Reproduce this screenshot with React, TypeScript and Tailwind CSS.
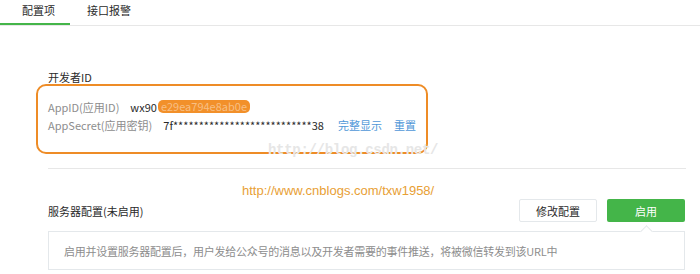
export default function App() {
  const stars = "*".repeat(27);

  return (
    <div className="relative w-[700px] h-[274px] overflow-hidden bg-white text-[11px] leading-[16px] text-[#2a2a2a] font-['Noto_Sans_CJK_SC',sans-serif]">
      {/* Tabs */}
      <div className="flex h-[26px] border-b border-[#e7e7e7]">
        <div className="w-[70px] pl-[22px] pt-[2px] border-b-2 border-[#44b549]">配置项</div>
        <div className="pl-[17px] pt-[2px]">接口报警</div>
      </div>

      <div className="pl-[48px] pr-[14px]">
        {/* Developer ID */}
        <div className="mt-[43px]">开发者ID</div>
        <div className="ml-[-12px] mt-[-1px] w-[392px] h-[70px] rounded-[10px] border-2 border-[#ee8c26] pl-[10px] pt-[12px] leading-[18px]">
          <div className="flex">
            <span className="text-[#8d8d8d]">AppID(应用ID)</span>
            <span className="ml-[11px]">wx90</span>
            <span className="ml-[1px] mt-[2px] h-[13px] px-[3px] rounded-[5px] bg-[#f2902a] text-[#f7bf84] leading-[13px]">e29ea794e8ab0e</span>
          </div>
          <div className="flex">
            <span className="text-[#8d8d8d]">AppSecret(应用密钥)</span>
            <span className="ml-[11px]">7f{stars}38</span>
            <span className="ml-[14px] text-[#4f97d8]">完整显示</span>
            <span className="ml-[12px] text-[#4f97d8]">重置</span>
          </div>
        </div>

        {/* Divider */}
        <div className="mt-[14px] border-t border-[#e7e7e7]" />

        {/* Server config */}
        <div className="mt-[30px] flex items-center h-[23px] pr-[1px]">
          <span className="flex-1">服务器配置(未启用)</span>
          <button className="w-[78px] h-[23px] border border-[#e4e8eb] bg-white text-[#2a2a2a] rounded-[2px]">修改配置</button>
          <button className="ml-[10px] w-[78px] h-[23px] bg-[#44b549] text-white rounded-[2px]">启用</button>
        </div>
        <div className="relative mt-[9px] mr-[1px] h-[39px] border border-[#e4e8eb] pl-[15px] flex items-center text-[#8d8d8d] tracking-[-0.25px]">
          启用并设置服务器配置后，用户发给公众号的消息以及开发者需要的事件推送，将被微信转发到该URL中
          <div className="absolute top-[-5px] left-[593px] w-[9px] h-[9px] rotate-45 bg-white border-l border-t border-[#e4e8eb]" />
        </div>
      </div>

      {/* Watermarks */}
      <div className="absolute left-[268px] top-[142px] text-[14px] font-['Liberation_Mono',monospace] font-bold text-[#e6e6e6] tracking-[-0.3px]">
        http://blog.csdn.net/
      </div>
      <div className="absolute left-[242px] top-[183px] text-[13px] font-['Liberation_Sans',Arial,sans-serif] text-[#e8a035]">
        http://www.cnblogs.com/txw1958/
      </div>
    </div>
  );
}
